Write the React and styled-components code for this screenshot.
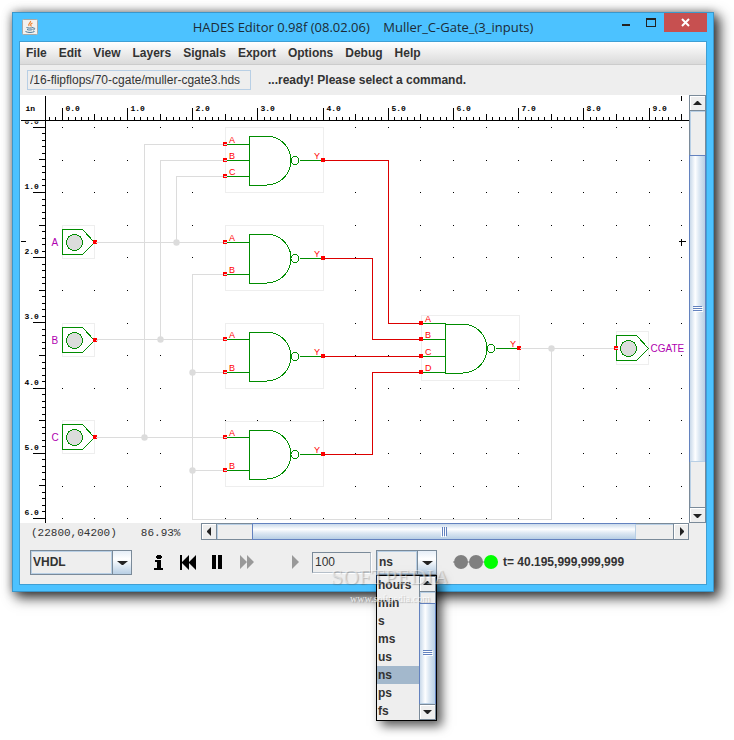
import React from "react";
import styled, { createGlobalStyle, css } from "styled-components";

const GlobalStyle = createGlobalStyle`
  * { box-sizing: border-box; }
  body { margin: 0; background: #fff; }
  button, select, input { font: inherit; color: inherit; margin: 0; }
`;

const Page = styled.div`
  padding: 12px 20px 148px 12px;
  font: bold 12px/16px "Liberation Sans", Arial, sans-serif;
  color: #333;
`;

const Frame = styled.main`
  position: relative;
  min-width: 640px;
  padding: 0 6px 6px;
  border: 1px solid #3a97cb;
  background: #4cc2ff;
  box-shadow: 5px 5px 12px 1px rgba(0, 0, 0, 0.75), 0 0 9px rgba(0, 0, 0, 0.35);
`;

const TitleBar = styled.header`
  display: grid;
  grid-template-columns: 88px 1fr 88px;
  height: 28px;
`;

const AppIcon = styled.svg`
  width: 16px;
  height: 16px;
  margin: 6px 0 0 3px;
`;

const Title = styled.h1`
  margin: 0;
  text-align: center;
  white-space: pre;
  font: normal 13px/28px "Open Sans", "Noto Sans", sans-serif;
  color: #1c2b36;
`;

const WindowButtons = styled.div`
  display: flex;
  justify-content: flex-end;
  align-items: flex-start;
`;

const WindowButton = styled.button`
  flex: none;
  width: ${(p) => (p.$close ? 43 : 25)}px;
  height: 19px;
  padding: 0;
  border: 0;
  background: ${(p) => (p.$close ? "#c75050" : "transparent")};
  svg { display: block; margin: 0 auto; }
`;

const Client = styled.div`
  border: 1px solid #3f9fd4;
  background: #eee;
`;

const MenuBar = styled.nav`
  display: flex;
  height: 23px;
  border-bottom: 1px solid #ccc;
  background: linear-gradient(#fff, #dadada);
`;

const MenuButton = styled.button`
  padding: 0 6px;
  border: 0;
  background: none;
  line-height: 21px;
`;

const PathBar = styled.div`
  display: flex;
  align-items: center;
  gap: 17px;
  height: 30px;
  padding: 0 7px;
`;

const PathField = styled.input`
  width: 224px;
  height: 20px;
  padding: 0 2px;
  border: 1px solid #b8cfe5;
  background: #eee;
  font-weight: normal !important;
`;

const Workspace = styled.section`
  display: grid;
  grid-template-columns: 1fr 17px;
  height: 428px;
`;

const Canvas = styled.svg`
  display: block;
  width: 100%;
  height: 100%;
  background: #fff;
  overflow: hidden;
`;

const Bar = styled.div`
  display: flex;
  flex-direction: ${(p) => (p.$vertical ? "column" : "row")};
  ${(p) => (p.$vertical ? "width" : "height")}: 17px;
  min-width: 0;
  min-height: 0;
  border: 1px solid #7a8a99;
  background: #eee;
  flex: 1;
`;

const BarButton = styled.button`
  display: flex;
  align-items: center;
  justify-content: center;
  flex: none;
  width: 15px;
  height: 15px;
  padding: 0;
  border: 0 solid #7a8a99;
  ${(p) => `border-${p.$edge}-width: 1px;`}
  background: #eee;
  box-shadow: inset 1px 1px #fff;
`;

const Gap = styled.span`
  flex: ${(p) => p.$grow} 0 0;
  box-shadow: inset 1px 1px #b8cfe5;
`;

const Thumb = styled.span`
  display: flex;
  align-items: center;
  justify-content: center;
  flex: ${(p) => p.$grow} 0 0;
  outline: 1px solid #6382bf;
  background: linear-gradient(${(p) => (p.$vertical ? "to right" : "to bottom")}, #c9d9ea, #fdfeff 35%, #dde8f3 60%, #b8cfe5);
`;

const Status = styled.div`
  display: grid;
  grid-template-columns: 181px 1fr 17px;
  height: 17px;
`;

const Coordinates = styled.div`
  display: flex;
  gap: 24px;
  padding-left: 11px;
  font: normal 11px/20px "Liberation Mono", monospace;
`;

const Controls = styled.form`
  display: flex;
  align-items: center;
  height: 44px;
  padding-left: 10px;
`;

const Combo = styled.div`
  position: relative;
  display: flex;
  flex: none;
  width: ${(p) => p.$width}px;
  height: 25px;
  border: 1px solid #7a8a99;
  background: #eee;
`;

const ComboSelect = styled.select`
  appearance: none;
  flex: 1;
  min-width: 0;
  padding: 0 1px;
  border: 1px solid #b8cfe5;
  border-radius: 0;
  background: transparent;
`;

const ComboArrow = styled.span`
  display: flex;
  align-items: center;
  justify-content: center;
  width: 19px;
  border-left: 1px solid #7a8a99;
  background: linear-gradient(#e6eef7, #fff 35%, #b8cfe5);
  pointer-events: none;
`;

const Transport = styled.div`
  display: flex;
  margin-left: 15px;
`;

const IconButton = styled.button`
  display: flex;
  align-items: center;
  justify-content: center;
  width: ${(p) => p.$width}px;
  height: 24px;
  margin-left: ${(p) => p.$lead || 0}px;
  padding: 0;
  border: 0;
  background: none;
`;

const StepField = styled.input`
  width: 59px;
  height: 21px;
  margin: 0 5px !important;
  padding: 0 2px;
  border: 1px solid #7a8a99;
  border-right-color: #b5bfc9;
  border-bottom-color: #b5bfc9;
  background: #eee;
  box-shadow: 1px 1px #fff;
  font-weight: normal !important;
`;

const Popup = styled.div`
  position: absolute;
  z-index: 1;
  top: 24px;
  left: -1px;
  display: flex;
  width: 61px;
  border: 1px solid #000;
  background: #eee;
  box-shadow: 5px 5px 10px rgba(0, 0, 0, 0.65);
`;

const Options = styled.ul`
  flex: 1;
  margin: 0;
  padding: 0;
  list-style: none;
`;

const Option = styled.li`
  height: 18px;
  padding-left: 1px;
  line-height: 18px;
  ${(p) => p.$selected && css`background: #a3b8cc;`}
`;

const ScrollSlot = styled.div`
  display: flex;
  width: 17px;
`;

const Lamps = styled.svg`
  width: 45px;
  height: 15px;
  margin: 0 5px 0 16px;
`;

const Watermark = styled.div`
  position: absolute;
  z-index: 2;
  top: 551px;
  left: 313px;
  width: 128px;
  text-align: center;
  pointer-events: none;
  color: rgba(255, 255, 255, 0.45);
  text-shadow: 1px 1px 1px rgba(90, 90, 90, 0.35);
  font: normal 22px/25px "Liberation Serif", serif;
  white-space: nowrap;
`;

const WatermarkUrl = styled.div`
  font-size: 10px;
  line-height: 20px;
  color: rgba(255, 255, 255, 0.8);
`;

const arrowPoints = {
  up: "0,5 4,1 5,1 9,5",
  down: "0,2 9,2 5,6 4,6",
  left: "5,0 1,4 1,5 5,9",
  right: "2,0 6,4 6,5 2,9",
};

function Arrow({ to, width = 9 }) {
  const sideways = to === "left" || to === "right";
  return (
    <svg
      width={sideways ? 7 : width}
      height={sideways ? 9 : 7}
      viewBox={sideways ? "0 0 7 9" : "0 0 9 7"}
      preserveAspectRatio="none"
      aria-hidden="true"
    >
      <polygon points={arrowPoints[to]} fill="#222" />
    </svg>
  );
}

function ScrollBar({ vertical, before, size, after }) {
  return (
    <Bar $vertical={vertical}>
      <BarButton type="button" aria-label={vertical ? "Scroll up" : "Scroll left"} $edge={vertical ? "bottom" : "right"}>
        <Arrow to={vertical ? "up" : "left"} />
      </BarButton>
      <Gap $grow={before} />
      <Thumb $grow={size} $vertical={vertical}>
        <svg width="10" height="10" shapeRendering="crispEdges" aria-hidden="true">
          <g transform={vertical ? undefined : "rotate(90 5 5)"}>
            <path d="M1 3.5h9M1 5.5h9M1 7.5h9" stroke="#fff" />
            <path d="M0 2.5h9M0 4.5h9M0 6.5h9" stroke="#6382bf" />
          </g>
        </svg>
      </Thumb>
      <Gap $grow={after} />
      <BarButton type="button" aria-label={vertical ? "Scroll down" : "Scroll right"} $edge={vertical ? "top" : "left"}>
        <Arrow to={vertical ? "down" : "right"} />
      </BarButton>
    </Bar>
  );
}

const GREEN = "#008c00";
const WIRE = "#dcdcdc";
const UNIT = 65.2;
const range = (from, to) => Array.from({ length: to - from + 1 }, (_, i) => from + i);
const labelFont = { fontFamily: "Liberation Sans, sans-serif", fontWeight: 400 };

function Rulers() {
  const tick = (i, major, half, minor) => (i % 10 === 0 ? major : i % 5 === 0 ? half : minor);
  const at = (origin, i) => Math.floor(origin + (i * UNIT) / 10 + 0.3);
  return (
    <g stroke="#000" fill="none">
      <path d="M45 95V524M20 120H2000" />
      {range(-2, 95).map((i) => (
        <path key={`x${i}`} d={`M${at(62, i)} 120v${-tick(i, 13, 7, 4)}`} />
      ))}
      {range(-1, 60).map((i) => (
        <path key={`y${i}`} d={`M45 ${at(127, i)}h${-tick(i, 13, 7, 4)}`} />
      ))}
      <path d="M681 95v5M20 241h5M678 241h7M681 238v7" />
      <g fill="#000" stroke="none" fontFamily="Liberation Mono, monospace" fontSize="8" fontWeight="700">
        <text x="25" y="110">in</text>
        {range(0, 9).map((n) => (
          <text key={n} x={at(65, n * 10)} y="110">{`${n}.0`}</text>
        ))}
        <g clipPath="url(#below-ruler)">
          {range(0, 6).map((n) => (
            <text key={n} x="24" y={at(123, n * 10)}>{`${n}.0`}</text>
          ))}
        </g>
      </g>
    </g>
  );
}

function GridDots() {
  return range(0, 12).map((row) =>
    range(0, 19).map((col) => (
      <rect
        key={`${row}-${col}`}
        x={Math.floor(62.3 + (col * UNIT) / 2) - 0.5}
        y={Math.floor(127.5 + (row * UNIT) / 2) - 0.5}
        width="1"
        height="1"
        fill="#000"
      />
    ))
  );
}

function Pin({ x, y, joined }) {
  return (
    <g>
      <rect x={x - 2.5} y={y - 2.5} width="4" height="4" fill="#f00" />
      {joined && <path d={joined === "left" ? `M${x - 2} ${y}h3` : `M${x} ${y}h2`} stroke={WIRE} />}
    </g>
  );
}

function Gate({ x, y, inputs, out }) {
  const mid = y + 33;
  return (
    <g>
      <rect x={x} y={y} width="98" height="65" fill="#fff" stroke="#eee" />
      <g fill="none" stroke={GREEN}>
        <path d={`M${x + 24} ${y + 8.5}h17a24.5 24.5 0 0 1 0 49h-17z`} />
        <circle cx={x + 69.5} cy={mid} r="4" />
        <path d={`M${x + 74} ${mid}h24`} />
        {inputs.map(([name, py]) => (
          <path key={name} d={`M${x} ${py}h24`} />
        ))}
      </g>
      <g fill="#f00" fontSize="9" {...labelFont}>
        {inputs.map(([name, py]) => (
          <text key={name} x={x + 3.5} y={py - 2}>{name}</text>
        ))}
        <text x={x + 88.5} y={mid - 2}>Y</text>
      </g>
      {inputs.map(([name, py]) => (
        <Pin key={name} x={x} y={py} joined={out === "red" ? "left" : undefined} />
      ))}
      <Pin x={x + 98} y={mid} joined={out === "grey" ? "right" : undefined} />
    </g>
  );
}

function Port({ x, y, name, output }) {
  return (
    <g>
      <rect x={x} y={y - 17} width="32" height="33" fill="#fff" stroke="#eee" />
      <g stroke={GREEN}>
        <path d={`M${x} ${y - 13}h20l12 13l-12 12h-20z`} fill="none" />
        <circle cx={x + 12} cy={y} r="8" fill="#dcdcdc" />
      </g>
      <text x={output ? x + 34 : x - 11} y={y + 3} fontSize="10" fill="#b000b0" {...labelFont}>{name}</text>
      <Pin x={output ? x : x + 33} y={y} joined={output ? "left" : "right"} />
    </g>
  );
}

const wires = [
  "M95 242H225", "M176 242V176H225",
  "M95 339H225", "M160 339V160H225",
  "M95 437H225", "M144 437V144H225",
  "M519 348H616", "M551 348V519H192V274H225", "M192 372H225", "M192 470H225",
];
const junctions = [[176, 242], [160, 339], [144, 437], [551, 348], [192, 372], [192, 470]];
const activeWires = [
  "M323 160H388V323H420", "M323 258H372V339H420", "M323 356H420", "M323 454H372V372H420",
];

function Schematic() {
  return (
    <Canvas role="img" aria-label="Muller C-gate schematic">
      <defs>
        <clipPath id="below-ruler">
          <rect x="20" y="121" width="25" height="402" />
        </clipPath>
      </defs>
      <g transform="translate(-19.5 -94.5)" shapeRendering="crispEdges">
        <GridDots />
        <g fill="none" stroke={WIRE}>
          {wires.map((d) => <path key={d} d={d} />)}
        </g>
        {junctions.map(([x, y]) => (
          <circle key={`${x}-${y}`} cx={x} cy={y} r="3.2" fill={WIRE} shapeRendering="geometricPrecision" />
        ))}
        <Gate x={225} y={127} inputs={[["A", 144], ["B", 160], ["C", 176]]} out="red" />
        <Gate x={225} y={225} inputs={[["A", 242], ["B", 274]]} out="red" />
        <Gate x={225} y={323} inputs={[["A", 339], ["B", 372]]} out="red" />
        <Gate x={225} y={421} inputs={[["A", 437], ["B", 470]]} out="red" />
        <Gate x={421} y={315} inputs={[["A", 323], ["B", 339], ["C", 356], ["D", 372]]} out="grey" />
        <Port x={62} y={242} name="A" />
        <Port x={62} y={340} name="B" />
        <Port x={62} y={437} name="C" />
        <Port x={616} y={348} name="CGATE" output />
        <g fill="none" stroke="#dc0000">
          {activeWires.map((d) => <path key={d} d={d} />)}
        </g>
        <Rulers />
      </g>
    </Canvas>
  );
}

function JavaIcon() {
  return (
    <AppIcon viewBox="0 0 16 16" aria-hidden="true">
      <rect x="0.5" y="0.5" width="15" height="15" rx="1" fill="#f3f1ee" stroke="#aaa9a6" />
      <path d="M8.500 2c1 1.600-3 2.500-1.500 5M10.500 4c-2 .8-2.500 1.600-1 3.500" fill="none" stroke="#ee8331" strokeWidth="1.200" />
      <path d="M4.500 8.500c1.500.8 5 .7 6.500 0M5 10.500c1.500.7 4 .7 5.500 0M11 9c2.500-.5 2 1.800.2 2M3.500 12.500c2 1.300 7 1.200 9 0" fill="none" stroke="#41769b" />
    </AppIcon>
  );
}

const menus = ["File", "Edit", "View", "Layers", "Signals", "Export", "Options", "Debug", "Help"];
const units = ["hours", "min", "s", "ms", "us", "ns", "ps", "fs"];

export default function App() {
  return (
    <Page>
      <GlobalStyle />
      <Frame>
        <TitleBar>
          <JavaIcon />
          <Title>{"HADES Editor 0.98f (08.02.06)    Muller_C-Gate_(3_inputs)"}</Title>
          <WindowButtons>
            <WindowButton aria-label="Minimize">
              <svg width="9" height="19"><path d="M0 12h8" stroke="#222" strokeWidth="2" /></svg>
            </WindowButton>
            <WindowButton aria-label="Maximize">
              <svg width="11" height="19" shapeRendering="crispEdges"><path d="M.5 5v8.500h9V5" fill="none" stroke="#222" /><path d="M0 6h10" stroke="#222" strokeWidth="2" /></svg>
            </WindowButton>
            <WindowButton aria-label="Close" $close>
              <svg width="9" height="19"><path d="M1 6l7 7M8 6l-7 7" stroke="#fff" strokeWidth="2" /></svg>
            </WindowButton>
          </WindowButtons>
        </TitleBar>
        <Client>
          <MenuBar aria-label="Main menu">
            {menus.map((m) => <MenuButton key={m}>{m}</MenuButton>)}
          </MenuBar>
          <PathBar>
            <PathField aria-label="Design file" defaultValue="/16-flipflops/70-cgate/muller-cgate3.hds" />
            <span>...ready! Please select a command.</span>
          </PathBar>
          <Workspace>
            <Schematic />
            <ScrollBar vertical before={45} size={303} after={46} />
          </Workspace>
          <Status>
            <Coordinates>
              <span>(22800,04200)</span>
              <span>86.93%</span>
            </Coordinates>
            <ScrollBar before={36} size={380} after={38} />
          </Status>
          <Controls onSubmit={(e) => e.preventDefault()}>
            <Combo $width={102}>
              <ComboSelect aria-label="Simulation mode"><option>VHDL</option></ComboSelect>
              <ComboArrow><Arrow to="down" width={11} /></ComboArrow>
            </Combo>
            <Transport>
              <IconButton type="button" aria-label="Information" $width={24}>
                <svg width="10" height="17"><path d="M3 1h4v1h1v2H7v1H3V4H2V2h1zM1 6h6v8h2v2H0v-2h3V8H1z" fill="#000" /></svg>
              </IconButton>
              <IconButton type="button" aria-label="Rewind" $width={34}>
                <svg width="17" height="15"><path d="M0 0h2v7l7-7v7l7-7v15l-7-7v7l-7-7v7H0z" fill="#000" /></svg>
              </IconButton>
              <IconButton type="button" aria-label="Pause" $width={24}>
                <svg width="10" height="14"><path d="M0 0h4v14H0zM6 0h4v14H6z" fill="#000" /></svg>
              </IconButton>
              <IconButton type="button" aria-label="Run" $width={36}>
                <svg width="14" height="14"><path d="M0 0l7 7V0l7 7-7 7V7l-7 7z" fill="#999" /></svg>
              </IconButton>
              <IconButton type="button" aria-label="Step" $width={24} $lead={18}>
                <svg width="7" height="14"><path d="M0 0l7 7-7 7z" fill="#999" /></svg>
              </IconButton>
            </Transport>
            <StepField aria-label="Step size" defaultValue="100" />
            <Combo $width={61}>
              <ComboSelect aria-label="Time unit"><option>ns</option></ComboSelect>
              <ComboArrow><Arrow to="down" width={11} /></ComboArrow>
              <Popup>
                <Options role="listbox" aria-label="Time units">
                  {units.map((u) => (
                    <Option key={u} role="option" aria-selected={u === "ns"} $selected={u === "ns"}>{u}</Option>
                  ))}
                </Options>
                <ScrollSlot>
                  <ScrollBar vertical before={13} size={100} after={1} />
                </ScrollSlot>
              </Popup>
            </Combo>
            <Lamps aria-hidden="true">
              <path d="M0 7h45" stroke="#808080" />
              <circle cx="8" cy="7" r="7" fill="#808080" />
              <circle cx="23" cy="7" r="7" fill="#808080" />
              <circle cx="38" cy="7" r="7" fill="#0f0" />
            </Lamps>
            <output>t= 40.195,999,999,999</output>
          </Controls>
        </Client>
        <Watermark aria-hidden="true">
          SOFTPEDIA
          <WatermarkUrl>www.softpedia.com</WatermarkUrl>
        </Watermark>
      </Frame>
    </Page>
  );
}
